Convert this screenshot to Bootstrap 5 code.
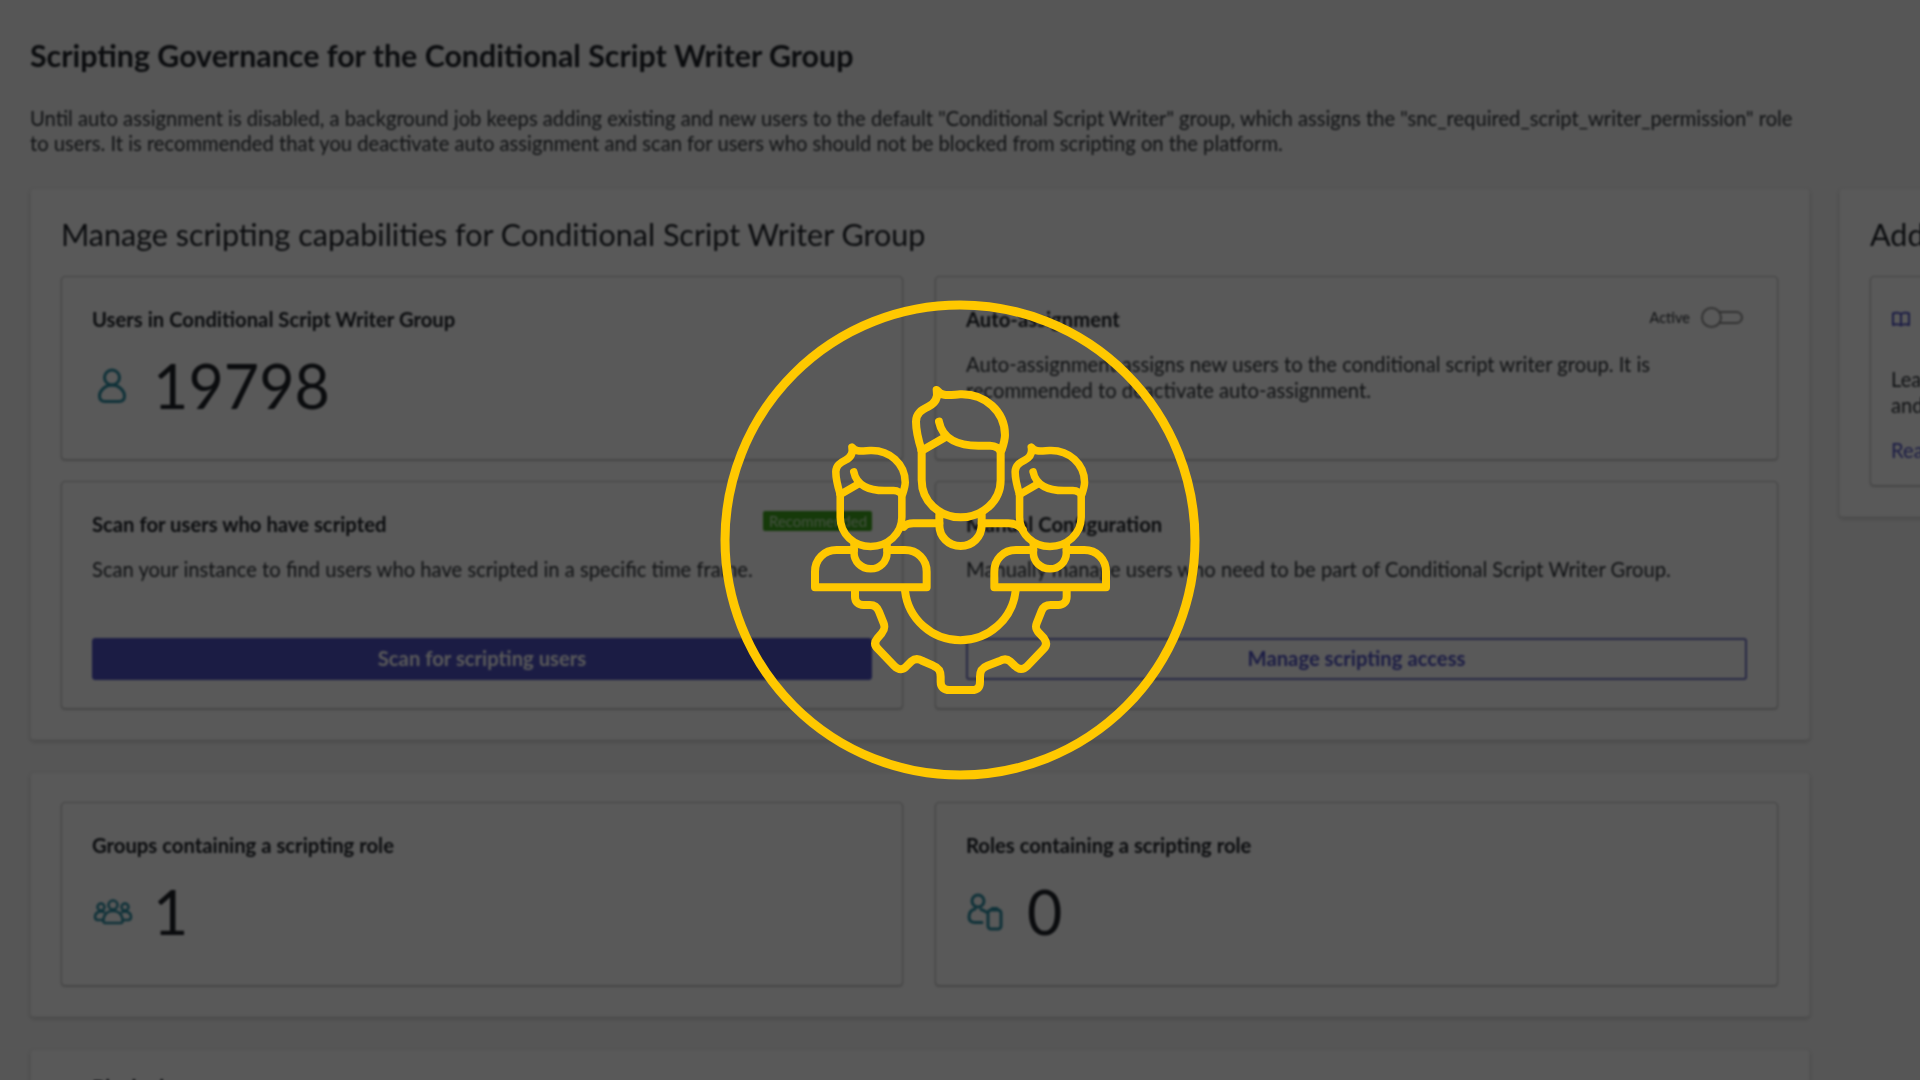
<!doctype html>
<html lang="en">
<head>
<meta charset="utf-8">
<title>Scripting Governance</title>
<link href="https://cdn.jsdelivr.net/npm/bootstrap@5.3.0/dist/css/bootstrap.min.css" rel="stylesheet">
<style>
html,body{height:1080px;overflow:hidden}
body{background:#f6f6f6;font-family:Lato,"Liberation Sans",sans-serif;color:#2e3338}
.stage{position:relative;width:1920px;height:1080px;overflow:hidden}
.backdrop-content{filter:blur(1px);padding:38px 0 0 30px;width:2400px}
.page-title{font-size:30.350px;font-weight:700;line-height:34px;margin:0 0 34px;color:#20242a;width:1780px}
.page-intro{font-size:20.200px;line-height:25px;margin:0 0 32px;width:1780px;color:#2e3338}
.panels{gap:29px;align-items:flex-start}
.panel{background:#fff;border:1px solid #ececec;border-radius:4px;box-shadow:0 2px 4px rgba(0,0,0,.16);padding:23px 30px 30px}
.col-main{width:1780px;flex:none;gap:32px}
.col-side{width:560px;flex:none}
.panel-title{font-size:30.500px;font-weight:400;line-height:44px;margin:0 0 20px;color:#20242a}
.panel-plain{padding-top:29px}
.panel-next{padding:25px 30px 30px 61px}
.tiles{display:grid;grid-template-columns:842px 843px;column-gap:32px;row-gap:21px}
.tile{border:1px solid #c2c2c2;border-radius:4px;box-shadow:0 1px 2px rgba(0,0,0,.2);padding:30px 30px 28px;background:#fff}
.tile-a{height:184px}
.tile-b{height:228px}
.tile-c{height:184px}
.tile-title{font-size:20.250px;font-weight:700;line-height:24px;color:#20242a;margin:0 0 21px}
.tile-text{font-size:20.200px;line-height:25.600px;margin:0;color:#2e3338}
.stat{height:68px;font-size:61px;font-weight:400;line-height:68px;color:#20242a;margin-top:4px}
.stat-icon{width:61px;flex:none;display:flex;align-items:center;padding-left:5px}
.stat-icon-wide{padding-left:1px}
.teal{stroke:#2d8ea3;fill:none;stroke-width:3;stroke-linejoin:round;stroke-linecap:round}
.teal-thin{stroke-width:2.500}
.tile-action{margin-top:auto}
.btn-scan,.btn-manage{display:block;width:100%;height:42px;font-size:20.250px;font-weight:700;line-height:38px;padding:0 0 2px;border-radius:3px;border:1px solid #4f52c4}
.btn-scan{background:#4f52c4;color:#fff}
.btn-manage{background:#fff;color:#4f52c4;border:2px solid #7375c4;line-height:36px}
.tag-rec{background:#3fa51f;color:#c5e8b8;font-size:15px;line-height:20px;height:20px;padding:0 6px;border-radius:2px;font-weight:400;white-space:nowrap;margin-top:-1px;width:109px}
.active-label{font-size:14.500px;color:#2e3338;margin-right:11px}
.switch-wrap{position:relative;width:42px;height:21px;flex:none;margin-right:4px}
.switch-track{position:absolute;left:8px;right:0;top:4px;height:13px;border:2px solid #8f8f8f;border-radius:7px;background:#fff}
.switch-knob{position:absolute;left:0;top:0;width:21px;height:21px;border:2px solid #8f8f8f;border-radius:50%;background:#fff}
.side-tile{height:210px;padding:34px 20px 20px}
.side-icon{display:block;margin-bottom:40px}
.side-text{margin-bottom:20px}
.side-link{color:#4f52c4;font-size:20.200px;line-height:25px;text-decoration:none;display:block}
.scrim{position:absolute;inset:0;background:rgba(0,0,0,.65)}
.hero-mark{position:absolute;left:700px;top:280px;width:520px;height:520px}
.hero-line{fill:none;stroke:#ffc800;stroke-width:24;stroke-linecap:round;stroke-linejoin:round}
.hero-line-small{stroke-width:29}
</style>
</head>
<body>
<div class="stage">
  <div class="backdrop-content">
    <h1 class="page-title">Scripting Governance for the Conditional Script Writer Group</h1>
    <p class="page-intro">Until auto assignment is disabled, a background job keeps adding existing and new users to the default "Conditional Script Writer" group, which assigns the "snc_required_script_writer_permission" role to users. It is recommended that you deactivate auto assignment and scan for users who should not be blocked from scripting on the platform.</p>
    <div class="d-flex panels">
      <div class="col-main d-flex flex-column">
        <section class="panel">
          <h2 class="panel-title">Manage scripting capabilities for Conditional Script Writer Group</h2>
          <div class="tiles">
            <div class="tile tile-a">
              <h3 class="tile-title">Users in Conditional Script Writer Group</h3>
              <div class="d-flex align-items-center stat">
                <div class="stat-icon"><svg width="30" height="36" viewBox="0 0 30 36"><circle class="teal" cx="15" cy="9.5" r="7.5"/><path class="teal" d="M15 17C8 17 2.500 23 2.500 28C2.500 31.500 4.500 33.500 8 33.500H22C25.500 33.500 27.500 31.500 27.500 28C27.500 23 22 17 15 17Z"/></svg></div>
                <span>19798</span>
              </div>
            </div>
            <div class="tile tile-a">
              <div class="d-flex justify-content-between align-items-start">
                <h3 class="tile-title">Auto-assignment</h3>
                <div class="d-flex align-items-center">
                  <span class="active-label">Active</span>
                  <span class="switch-wrap"><span class="switch-track"></span><span class="switch-knob"></span></span>
                </div>
              </div>
              <p class="tile-text">Auto-assignment assigns new users to the conditional script writer group. It is<br>recommended to deactivate auto-assignment.</p>
            </div>
            <div class="tile tile-b d-flex flex-column">
              <div class="d-flex justify-content-between align-items-start">
                <h3 class="tile-title">Scan for users who have scripted</h3>
                <span class="tag-rec">Recommended</span>
              </div>
              <p class="tile-text">Scan your instance to find users who have scripted in a specific time frame.</p>
              <div class="tile-action"><button type="button" class="btn btn-scan">Scan for scripting users</button></div>
            </div>
            <div class="tile tile-b d-flex flex-column">
              <h3 class="tile-title">Manual Configuration</h3>
              <p class="tile-text">Manually manage users who need to be part of Conditional Script Writer Group.</p>
              <div class="tile-action"><button type="button" class="btn btn-manage">Manage scripting access</button></div>
            </div>
          </div>
        </section>
        <section class="panel panel-plain">
          <div class="tiles">
            <div class="tile tile-c">
              <h3 class="tile-title">Groups containing a scripting role</h3>
              <div class="d-flex align-items-center stat">
                <div class="stat-icon stat-icon-wide"><svg width="40" height="26" viewBox="0 0 40 26"><g class="teal teal-thin"><circle cx="20" cy="6" r="4.500"/><circle cx="8" cy="8" r="3.500"/><circle cx="32" cy="8" r="3.500"/><path d="M12 24C10 24 10 21 11 18C12 15 15 12 20 12C25 12 28 15 29 18C30 21 30 24 28 24Z"/><path d="M11 13C6 11.500 2 14 2 18C2 20 3 21 5 21H10"/><path d="M29 13C34 11.500 38 14 38 18C38 20 37 21 35 21H30"/></g></svg></div>
                <span>1</span>
              </div>
            </div>
            <div class="tile tile-c">
              <h3 class="tile-title">Roles containing a scripting role</h3>
              <div class="d-flex align-items-center stat">
                <div class="stat-icon stat-icon-wide"><svg width="36" height="38" viewBox="0 0 36 38"><g class="teal"><circle cx="11" cy="8" r="6"/><path d="M8 16C3.500 17 2 21 2 24C2 27.500 4 29.500 8 29.500H15"/><path d="M14 16.500C16 17 18 18 19 19"/><rect x="21" y="17" width="13" height="19" rx="3"/><path d="M25 15.500H30"/></g></svg></div>
                <span>0</span>
              </div>
            </div>
          </div>
        </section>
        <section class="panel panel-next">
          <h3 class="tile-title">Blocked</h3>
        </section>
      </div>
      <div class="col-side">
        <section class="panel">
          <h2 class="panel-title">Additional resources</h2>
          <div class="tile side-tile">
            <svg width="20" height="16" viewBox="0 0 20 16" class="side-icon"><path d="M10 3C8 1.500 4 1.500 2 2.500V14C4 13 8 13 10 14.500C12 13 16 13 18 14V2.500C16 1.500 12 1.500 10 3ZM10 3V14.500" fill="none" stroke="#4f52c4" stroke-width="2" stroke-linejoin="round"/></svg>
            <p class="tile-text side-text text-nowrap">Learn how to manage scripting capabilities on the platform<br>and review the recommended steps.</p>
            <a class="side-link" href="#">Read more</a>
          </div>
        </section>
      </div>
    </div>
  </div>
  <div class="scrim"></div>
  <svg class="hero-mark" viewBox="0 0 1560 1560" aria-hidden="true">
    <defs>
      <g id="personHead">
        <path d="M665 512V600C665 665 718 712 782 712C846 712 902 665 902 600V520C902 505 885 497 870 497H835C780 497 728 480 717 425"/>
        <path d="M665 512L738 470"/>
        <path d="M665 512C655 480 648 450 648 425C648 400 665 390 685 380C705 370 715 355 710 330C725 350 745 345 780 343C855 340 915 395 915 465C915 480 910 495 905 510"/>
        <path d="M718 705V735C718 770 745 798 782 798C818 798 845 770 845 735V705"/>
      </g>
    </defs>
    <circle cx="780" cy="780" r="705" fill="none" stroke="#ffc800" stroke-width="27"/>
    <g class="hero-line">
      <use href="#personHead"/>
      <g class="hero-line-small"><use href="#personHead" transform="translate(-98 244) scale(.78)"/><use href="#personHead" transform="translate(440 244) scale(.78)"/></g>
      <path d="M612 740C618 733 625 730 640 730H718M845 730H925C945 730 958 738 968 748"/>
      <path d="M462 810H410C372 810 345 838 345 875V922H680V875C680 838 652 810 615 810H562"/>
      <path d="M1000 810H948C910 810 883 838 883 875V922H1218V875C1218 838 1190 810 1153 810H1100"/>
      <path d="M465 932V950C465 965 475 975 490 975H510C525 975 532 982 537 995L551 1030C556 1043 553 1050 545 1060L532 1075C522 1087 524 1098 535 1108L583 1158C597 1172 610 1170 620 1158L634 1144C645 1135 655 1135 668 1143L700 1157C716 1163 722 1172 722 1190V1205C722 1222 732 1230 748 1230H815C832 1230 840 1222 840 1205V1190C840 1172 846 1163 862 1157L897 1144C910 1136 920 1135 930 1144L945 1158C957 1170 970 1170 982 1158L1030 1108C1040 1098 1041 1087 1032 1075L1018 1060C1008 1050 1005 1043 1010 1030L1025 992C1030 980 1038 975 1052 975H1075C1090 975 1100 965 1100 950V932"/>
      <path d="M615 932A167 167 0 0 0 947 932"/>
    </g>
  </svg>
</div>
<script src="https://cdn.jsdelivr.net/npm/bootstrap@5.3.0/dist/js/bootstrap.bundle.min.js"></script>
</body>
</html>
